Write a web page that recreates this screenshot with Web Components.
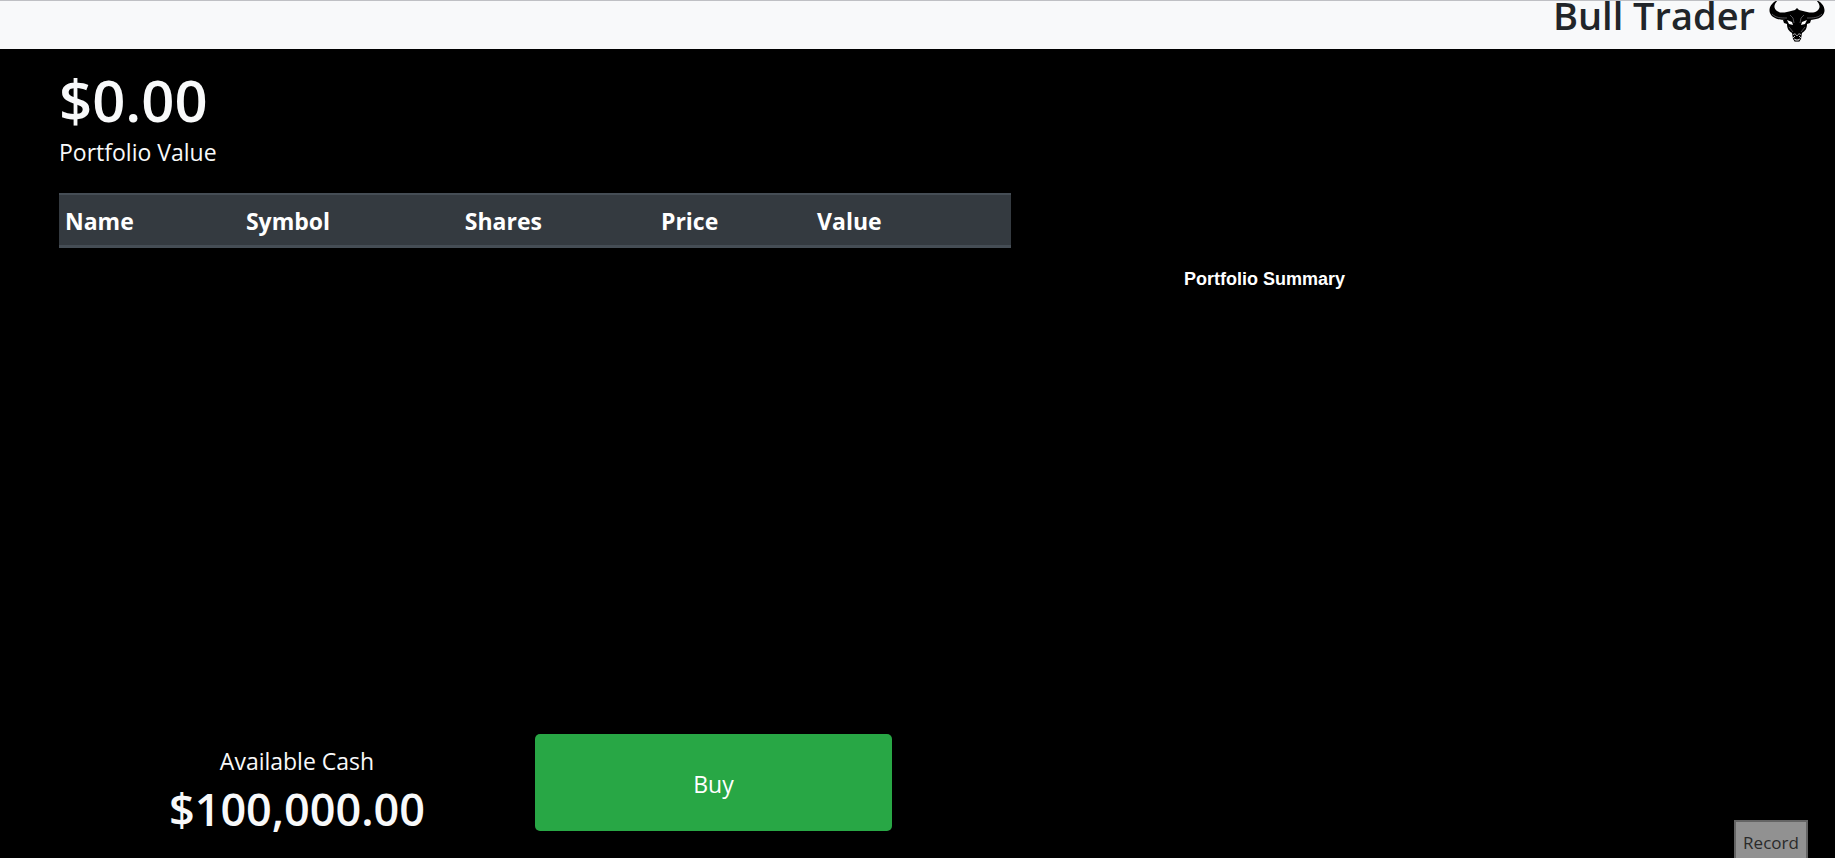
<!DOCTYPE html>
<html lang="en">
<head>
<meta charset="utf-8">
<title>Bull Trader</title>
<style>
  html, body { margin: 0; height: 100%; }
  body { background: #000; font-family: "Open Sans", "Noto Sans", sans-serif; }
</style>
</head>
<body>
<trader-app></trader-app>

<template id="bull-logo-template">
  <style>
    :host { display: block; width: 56px; height: 41px; }
    svg { display: block; width: 100%; height: 100%; }
  </style>
  <svg viewBox="0 1 56 41" role="img" aria-label="Bull">
    <path fill="#000" d="M9 0C3 2-1 8 1 13c2 5 8 7 16 7l-3 0 1 3 3 1c0 5 2 7 5 9l1 6 2 3h4l2-3 1-6c3-2 5-4 5-9l3-1 1-3h-3c8 0 14-2 16-7C57 8 53 2 47 0c4 4 5 8 1 11-4 3-10 1-14 0l-4-1-2-2-2 2-4 1c-4 1-10 3-14 0C4 8 5 4 9 0z"/>
    <path fill="none" stroke="#8c8c90" stroke-width=".6" d="M3 14c4 4 9 4 15 4M53 14c-4 4-9 4-15 4M21 15l3 3 1 5M35 15l-3 3-1 5M20 27l4 5M36 27l-4 5"/>
    <path fill="#fff" d="M18 20l5 2 1 3-4-1zM38 20l-5 2-1 3 4-1z"/>
    <path fill="none" stroke="#c4c4c6" stroke-width="1" d="M24 35c1-2 3-1 4 1 1-2 3-3 4-1M24 38l2-2M32 38l-2-2M25 39l3 1 3-1M26 41h4"/>
  </svg>
</template>

<template id="top-bar-template">
  <style>
    :host { display: flex; justify-content: flex-end; align-items: flex-start; gap: 14px; box-sizing: border-box;
      height: 49px; padding-right: 10px; background: #f8f9fa; border-top: 1px solid #bfc0c4; color: #212529; }
    h1 { margin: 0; font-size: 38px; line-height: 28px; font-weight: 600; white-space: nowrap; }
  </style>
  <h1><slot></slot></h1>
  <bull-logo></bull-logo>
</template>

<template id="money-figure-template">
  <style>
    :host { display: flex; flex-direction: column; color: #f8f9fa; }
    strong { font-weight: 600; font-size: 58px; line-height: 72px; }
    span { font-size: 23px; line-height: 32px; }
    :host([cash]) { flex-direction: column-reverse; align-items: center; }
    :host([cash]) strong { font-size: 45px; line-height: 64px; }
  </style>
  <strong><slot name="amount"></slot></strong>
  <span><slot></slot></span>
</template>

<template id="holdings-table-template">
  <style>
    :host { display: block; }
    table { width: 100%; border-collapse: separate; border-spacing: 0; table-layout: fixed; background: #343a40; color: #fff; }
    th { box-sizing: border-box; height: 55px; padding: 2px 6px 0; text-align: left; font-size: 23px; line-height: 36px; font-weight: 700;
      border-top: 2px solid #454d55; border-bottom: 3px solid #454d55; }
    .name { width: 19%; } .symbol { width: 23%; } .shares { width: 20.6%; } .price { width: 16.4%; }
  </style>
  <table>
    <thead><tr>
      <th class="name" scope="col">Name</th><th class="symbol" scope="col">Symbol</th><th class="shares" scope="col">Shares</th>
      <th class="price" scope="col">Price</th><th scope="col">Value</th>
    </tr></thead>
  </table>
</template>

<template id="buy-button-template">
  <style>
    :host { display: block; }
    button { display: block; width: 100%; height: 97px; border: 0; border-radius: 5px; background: #28a745; color: #fff;
      font-family: inherit; font-size: 23px; line-height: 32px; padding: 2px 0 0; cursor: pointer; }
  </style>
  <button type="button"><slot></slot></button>
</template>

<template id="record-button-template">
  <style>
    :host { display: block; position: fixed; right: 27px; bottom: -4px; }
    button { box-sizing: border-box; width: 74px; height: 42px; padding: 4px 0 0; border: 2px solid #646464; background: #919191;
      color: #2a2a2a; font-family: inherit; font-size: 17px; line-height: 24px; }
  </style>
  <button type="button"><slot></slot></button>
</template>

<template id="trader-app-template">
  <style>
    :host { display: flex; flex-direction: column; min-height: 100vh; }
    main { flex: 1; display: grid; grid-template-columns: 952fr 651fr; column-gap: 173px; padding: 15px 0 17px 59px; }
    .book { display: flex; flex-direction: column; }
    holdings-table { margin-top: 25px; }
    .actions { margin-top: auto; display: grid; grid-template-columns: 1fr 1fr; align-items: start; }
    .actions money-figure { padding-top: 11px; }
    buy-button { width: 75%; }
    h2 { margin: 203px 0 0; font: 700 18px/24px "Liberation Sans", Arial, sans-serif; color: #fff; }
  </style>
  <top-bar>Bull Trader</top-bar>
  <main>
    <section class="book">
      <money-figure><span slot="amount">$0.00</span>Portfolio Value</money-figure>
      <holdings-table></holdings-table>
      <div class="actions">
        <money-figure cash><span slot="amount">$100,000.00</span>Available Cash</money-figure>
        <buy-button>Buy</buy-button>
      </div>
    </section>
    <section><h2>Portfolio Summary</h2></section>
  </main>
  <record-button>Record</record-button>
</template>

<script>
  for (const name of ["bull-logo", "top-bar", "money-figure", "holdings-table", "buy-button", "record-button", "trader-app"]) {
    customElements.define(name, class extends HTMLElement {
      constructor() {
        super();
        this.attachShadow({ mode: "open" })
          .append(document.getElementById(name + "-template").content.cloneNode(true));
      }
    });
  }
</script>
</body>
</html>
